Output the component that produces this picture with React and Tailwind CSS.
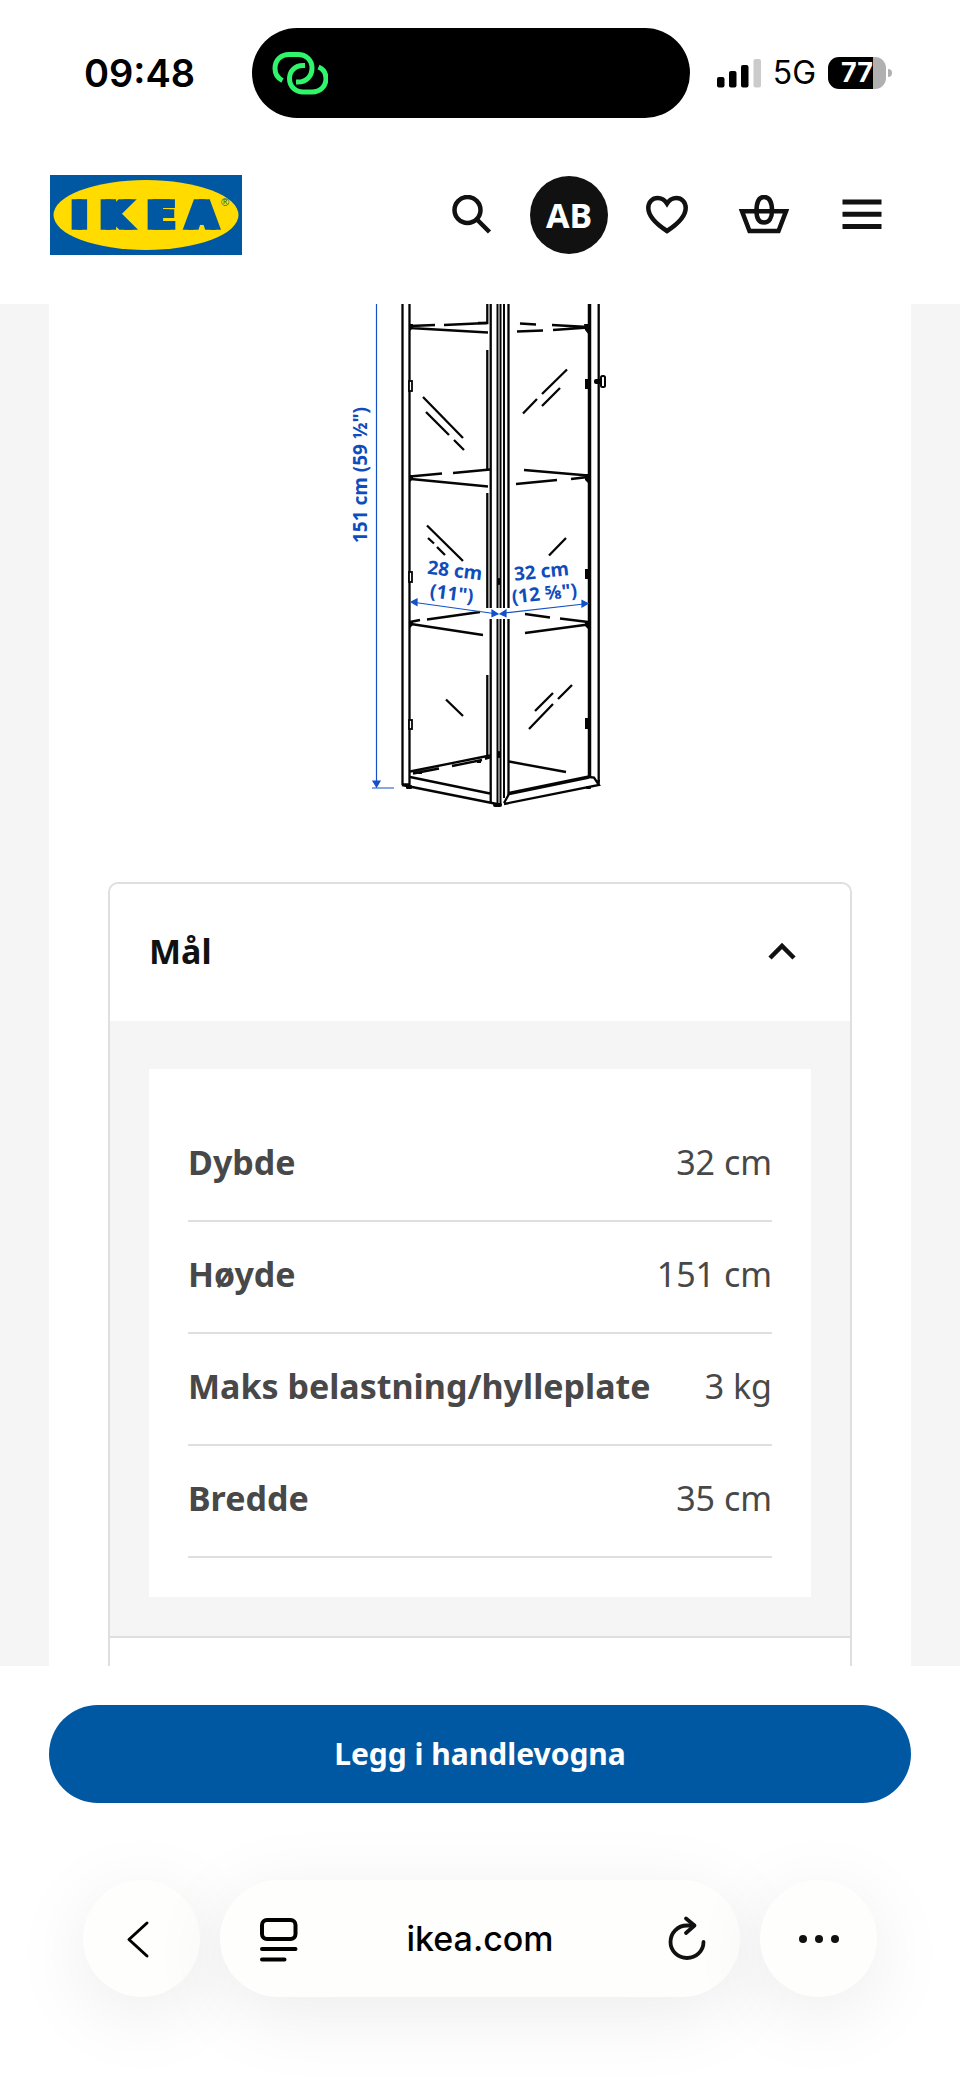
const measurements = [
  ["Dybde", "32 cm"],
  ["Høyde", "151 cm"],
  ["Maks belastning/hylleplate", "3 kg"],
  ["Bredde", "35 cm"],
];

function StatusBar() {
  return (
    <div className="flex items-center pt-7 pr-[68px] pl-[84px] font-['Inter',sans-serif] text-black">
      <div className="flex w-[168px] shrink-0 items-center">
        <span className="text-[38px] leading-[50px] font-semibold">09:48</span>
      </div>
      <div className="flex h-[90px] w-[438px] items-center rounded-full bg-black px-5">
        <svg viewBox="0 0 56 44" className="h-11 w-14" fill="none" stroke="#30f56b" strokeWidth="5">
          <path d="M10.500 29.500C5.500 27 3 22.500 3 17.500 3 9 9 3.500 17 3.500H26C34 3.500 40 9 40 17 40 25.500 34 31 26 31H24" />
          <path d="M33 15.500H31C23 15.500 17.500 21 17.500 28.500 17.500 36.500 23.500 42 31 42H40C48 42 54 36.500 54 28.500 54 23 51 19 46.500 17" transform="translate(0 -1)" />
        </svg>
      </div>
      <div className="flex flex-1 items-center justify-end gap-3">
        <svg viewBox="0 0 44 30" className="h-[30px] w-11 shrink-0">
          <rect x="0" y="19" width="7.500" height="10.500" rx="2" />
          <rect x="12" y="13" width="7.500" height="16.500" rx="2" />
          <rect x="24" y="7" width="7.500" height="22.500" rx="2" />
          <rect x="36.500" y="1" width="7.500" height="28.500" rx="2" fill="#cbcbcb" />
        </svg>
        <span className="text-[32px] leading-[50px]">5G</span>
        <div className="flex items-center gap-[2px]">
          <div className="flex h-8 w-[58px] items-center justify-center overflow-hidden rounded-[11px] bg-linear-to-r from-black from-78% to-[#b0b0b0] to-78% text-[27px] leading-8 font-bold text-white">
            77
          </div>
          <div className="h-2 w-1 rounded-r-full bg-[#b0b0b0]" />
        </div>
      </div>
    </div>
  );
}

function Logo() {
  return (
    <svg viewBox="0 0 192 80" className="h-20 w-48" role="img" aria-label="IKEA">
      <rect width="192" height="80" fill="#0058a3" />
      <ellipse cx="96" cy="40" rx="92.500" ry="35" fill="#ffdb00" />
      <text
        x="20 49 96 135"
        y="53"
        className="drop-shadow-[5px_0_0_#0058a3]"
        fontFamily="DejaVu Sans, sans-serif"
        fontWeight="700"
        fontSize="37"
        fill="#0058a3"
        stroke="#0058a3"
        strokeWidth="3.500"
      >
        IKEA
      </text>
      <text x="171" y="31" fontFamily="Liberation Sans, sans-serif" fontSize="11" fill="#0058a3">®</text>
    </svg>
  );
}

function Header() {
  return (
    <header className="flex items-center justify-between pt-[57px] pr-[78px] pb-[49px] pl-[50px] text-[#111]">
      <a href="#"><Logo /></a>
      <nav className="flex items-center">
        <button aria-label="Søk" className="mr-[38px]">
          <svg viewBox="0 0 40 40" className="size-10" fill="none" stroke="currentColor" strokeWidth="4.500">
            <circle cx="15.500" cy="15" r="13" />
            <path d="M25 24.500L37.500 37" />
          </svg>
        </button>
        <button className="mr-[38px] flex size-[78px] items-center justify-center rounded-full bg-[#111] font-['Noto_Sans',sans-serif] text-[34px] leading-none font-bold text-white">
          AB
        </button>
        <button aria-label="Ønskeliste" className="mr-[51px]">
          <svg viewBox="0 0 42 40" className="h-10 w-[42px]" fill="none" stroke="currentColor" strokeWidth="4.500">
            <path d="M21 36C11 29.500 2.300 22 2.300 13C2.300 7 6.500 3 11.500 3C16 3 19 5.300 21 8.500C23 5.300 26 3 30.500 3C35.500 3 39.700 7 39.700 13C39.700 22 31 29.500 21 36Z" />
          </svg>
        </button>
        <button aria-label="Handlevogn" className="mr-[53px]">
          <svg viewBox="0 0 50 40" className="h-10 w-[50px]" fill="none" stroke="currentColor" strokeWidth="4.500">
            <path d="M3 16.300H47L39.500 36H10.500Z" />
            <path d="M25 2C20 2 17.500 6 17.500 16C17.500 23 20 27.500 25 27.500C30 27.500 33 23 33 16C33 6 30 2 25 2Z" />
          </svg>
        </button>
        <button aria-label="Meny">
          <svg viewBox="0 0 40 40" className="size-10" stroke="currentColor" strokeWidth="5">
            <path d="M0.500 7H39.500M0.500 19.300H39.500M0.500 31.500H39.500" />
          </svg>
        </button>
      </nav>
    </header>
  );
}

function CabinetDrawing() {
  return (
    <svg viewBox="49 304 862 578" className="block h-auto w-full" role="img" aria-label="Vitrineskap med mål">
      <g fill="none" stroke="#050505" strokeWidth="2.300">
        {/* frame posts */}
        <path d="M402.500 304V785M409.500 304V785" />
        <path d="M487.300 304V323H478M487.300 350V469M487.300 493V608M487.300 675V757" />
        <path d="M490.700 304V608M490.700 619V803" />
        <path d="M497.500 304V608M500.500 304V608M504 304V608M497.500 619V805M500.500 619V805M504 619V798" strokeWidth="2" />
        <path d="M508.500 304V608M508.500 619V795" />
        <path d="M589.500 304V777" strokeWidth="3.500" />
        <path d="M598.700 304V782" />
        {/* shelves */}
        <path d="M410 326L435 325M444 325L487 323M410 328L488 332.500" />
        <path d="M520 323.500L536 324.500M552 325L588 327M517 331.500L543 330.500M553 330L588 327.500" />
        <path d="M410 476.500L442 473.500M453 473L490 469.500M411 479L488 486.500" />
        <path d="M524 470L588 475.500M516 484L557 480M571 479L588 477" />
        <path d="M410 622L420 620M427 619.500L480 612M411 624L483 635" />
        <path d="M525 614L550 617.500M560 618.500L588 622M525 633L588 624.500" />
        {/* glass reflections */}
        <path d="M423 397L463 438M426 412L449 435M454 440L464 450" />
        <path d="M567 369.500L542 394M537 399L523 413.500M560 388L542 406" />
        <path d="M427 525.500L463 561M428 538L434 543.500M437 547L445 555M566 538L549 555.500" />
        <path d="M446 699.500L463 716M553 693L535 711M572 685L558 699M553 704L529 729" />
        {/* base */}
        <path d="M410 771.500L490 755.500M485 759L490 757.500M413 773.500L439 768.500M452 766L482 760" />
        <path d="M509 761.500L566 772M410 777L490 793.500M402 785L497 804" />
        <path d="M509 793.500L589 777" strokeWidth="3.500" />
        <path d="M504 803L509 794M589 777L594 777.500L599 785L504 804M598.700 780V786M402 784.500H409" />
      </g>
      <g fill="#050505">
        <path d="M409 324h4v4l-4 4zM584 324h5v11l-4-5zM409 475h4v4l-4 4zM585 474h4v10l-4-4zM409 621h4v4l-4 4zM585 621h4v9l-4-4z" />
        <rect x="585" y="379" width="5" height="10" />
        <rect x="585" y="569" width="5" height="10" />
        <rect x="585" y="718" width="5" height="11" />
        <rect x="497" y="578" width="4" height="7" rx="2" />
        <rect x="497" y="751" width="4" height="7" rx="2" />
        <rect x="406" y="785" width="6" height="4" rx="1" />
        <rect x="493" y="803" width="9" height="4" rx="2" />
        <rect x="586" y="786" width="5" height="3" rx="1" />
        <rect x="594" y="379" width="8" height="5" rx="2" />
        <rect x="418" y="772" width="4" height="2" />
        <rect x="477" y="761" width="4" height="2" />
      </g>
      <g fill="#fff" stroke="#050505" strokeWidth="1.800">
        <rect x="409" y="381" width="3" height="10" />
        <rect x="409" y="572" width="3" height="10" />
        <rect x="409" y="720" width="3" height="9" />
        <rect x="601" y="376" width="4" height="11" rx="1.500" strokeWidth="2" />
      </g>
      <g stroke="#1450c8" fill="#1450c8" strokeWidth="1.200">
        <path d="M376.500 304V782M372 788H394" />
        <path d="M376.500 787L373 781H380Z" />
        <path d="M415 602.500L494 613.500M504 613L584 604" />
        <path d="M411 602L417 599V605.500ZM498 614L492 610V616.500ZM500 614L506 610V616.500ZM588 603.500L582 600.500V607Z" />
      </g>
      <g fill="#0f4dbc" fontFamily="Noto Sans, sans-serif" fontWeight="700" fontSize="19" textAnchor="middle">
        <text transform="translate(367 475) rotate(-90)">151 cm (59 ½")</text>
        <text transform="translate(454 577) rotate(7)">28 cm</text>
        <text transform="translate(451 600) rotate(7)">(11")</text>
        <text transform="translate(542 578) rotate(-6)">32 cm</text>
        <text transform="translate(545 600) rotate(-6)">(12 ⅝")</text>
      </g>
    </svg>
  );
}

function Measurements() {
  return (
    <section className="mx-[59px] rounded-t-[10px] border-2 border-b-0 border-[#dfdfdf]">
      <h2>
        <button aria-expanded="true" className="flex w-full items-center justify-between px-[39px] pt-[41px] pb-11 text-[34px] leading-[52px] font-bold text-[#111]">
          Mål
          <svg viewBox="0 0 28 18" className="mr-[15px] h-[18px] w-7" fill="none" stroke="currentColor" strokeWidth="4.500">
            <path d="M2 16L14 4L26 16" />
          </svg>
        </button>
      </h2>
      <div className="border-b-2 border-[#dfdfdf] bg-[#f5f5f5] px-[39px] pt-12 pb-[39px]">
        <div className="bg-white px-[39px] pt-[41px] pb-[39px]">
          <table className="w-full text-[34px] leading-[52px] text-[#484848]">
            <tbody>
              {measurements.map(([name, value]) => (
                <tr key={name} className="border-b-2 border-[#dfdfdf]">
                  <th scope="row" className="pt-[26px] pb-8 text-left font-bold">{name}</th>
                  <td className="pt-[26px] pb-8 text-right">{value}</td>
                </tr>
              ))}
            </tbody>
          </table>
        </div>
      </div>
      <div className="h-7" />
    </section>
  );
}

const glass = "bg-[#fefefd] shadow-[0_16px_80px_rgba(0,0,0,0.08)]";

function BrowserBar() {
  return (
    <div className="flex items-center gap-5 px-[83px] pt-[77px] pb-[83px] text-black">
      <button aria-label="Tilbake" className={`flex size-[117px] shrink-0 items-center justify-center rounded-full ${glass}`}>
        <svg viewBox="0 0 40 40" className="mr-2 size-10" fill="none" stroke="currentColor" strokeWidth="3" strokeLinecap="round" strokeLinejoin="round">
          <path d="M29 4L11 20.500L29 37" />
        </svg>
      </button>
      <div className={`flex h-[117px] flex-1 items-center justify-between rounded-full px-[31px] ${glass}`}>
        <button aria-label="Sidemeny">
          <svg viewBox="0 0 48 48" className="size-12" fill="none" stroke="currentColor" strokeWidth="4" strokeLinecap="round">
            <rect x="11" y="5" width="33.500" height="19" rx="5" />
            <path d="M11 34H44.500M11 44.500H33.500" />
          </svg>
        </button>
        <span className="font-['Inter',sans-serif] text-[34px] leading-[50px] font-medium">ikea.com</span>
        <button aria-label="Last inn på nytt">
          <svg viewBox="0 0 48 48" className="size-12" fill="none" stroke="#111" strokeWidth="3.800" strokeLinecap="round" strokeLinejoin="round">
            <path d="M33 10.500H26C16.500 10.500 9.500 18 9.500 27C9.500 36 17 43 26 43C35 43 42.500 36 42.500 27" />
            <path d="M25 3.500L33.500 10.500L25 18" />
          </svg>
        </button>
      </div>
      <button aria-label="Mer" className={`flex size-[117px] shrink-0 items-center justify-center gap-2 rounded-full ${glass}`}>
        <span className="size-2 rounded-full bg-[#111]" />
        <span className="size-2 rounded-full bg-[#111]" />
        <span className="size-2 rounded-full bg-[#111]" />
      </button>
    </div>
  );
}

export default function App() {
  return (
    <div className="overflow-hidden bg-white font-['Noto_Sans',sans-serif]">
      <StatusBar />
      <Header />
      <main className="bg-[#f5f5f5] px-[49px]">
        <div className="bg-white">
          <CabinetDrawing />
          <Measurements />
        </div>
      </main>
      <div className="px-[49px] pt-[39px]">
        <button className="w-full rounded-full bg-[#0058a3] py-6 text-[30px] leading-[50px] font-bold text-white">
          Legg i handlevogna
        </button>
      </div>
      <BrowserBar />
    </div>
  );
}
